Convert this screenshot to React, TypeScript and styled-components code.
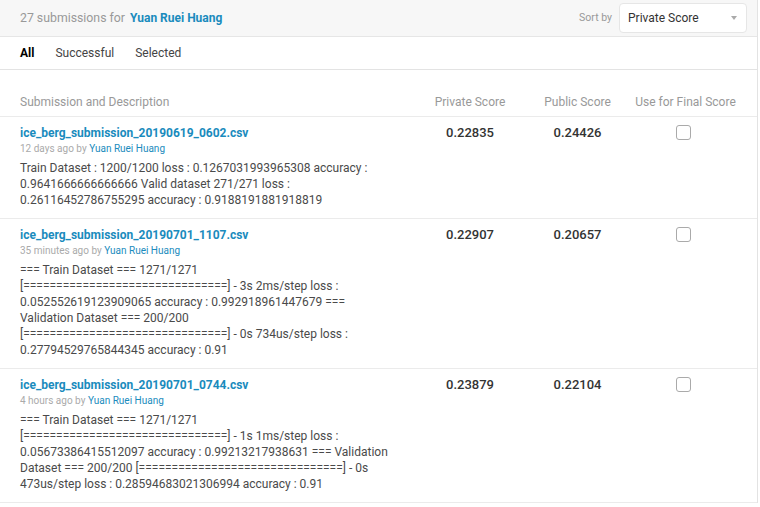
import React from "react";
import styled, { createGlobalStyle } from "styled-components";

const Global = createGlobalStyle`
  html, body { margin: 0; padding: 0; background: #fff; }
  body { font-family: Roboto, "Liberation Sans", Arial, sans-serif; color: #333; }
  * { box-sizing: border-box; }
`;

const Card = styled.div`
  width: 758px;
  border-right: 1px solid #e3e3e3;
  background: #fff;
`;

const TopBar = styled.div`
  height: 37px;
  background: #f7f7f7;
  border-bottom: 1px solid #e6e6e6;
  display: flex;
  align-items: center;
  padding: 0 10px 1px 20px;
`;

const Count = styled.div`
  flex: 1;
  font-size: 12.3px;
  color: #999;
`;

const Owner = styled.span`
  color: #1a8bbd;
  font-weight: 700;
  font-size: 12px;
  margin-left: 5px;
`;

const SortLabel = styled.span`
  font-size: 10.5px;
  color: #999;
  margin-right: 7px;
`;

const Select = styled.div`
  width: 128px;
  height: 30px;
  background: #fff;
  border: 1px solid #e6e6e6;
  border-radius: 4px;
  display: flex;
  align-items: center;
  justify-content: space-between;
  padding: 0 9px 0 8px;
  font-size: 12px;
  color: #333;
`;

const Caret = styled.span`
  width: 0;
  height: 0;
  border-left: 3.5px solid transparent;
  border-right: 3.5px solid transparent;
  border-top: 4px solid #aaa;
`;

const Tabs = styled.div`
  height: 33px;
  border-bottom: 1px solid #e3e3e3;
  display: flex;
  align-items: center;
  gap: 21px;
  padding: 0 0 0 20px;
`;

const Tab = styled.span<{ $active?: boolean }>`
  font-size: 12px;
  color: ${(p) => (p.$active ? "#000" : "#444")};
  font-weight: ${(p) => (p.$active ? 700 : 400)};
`;

const Grid = styled.div`
  display: grid;
  grid-template-columns: 390px 120px 95px 121px;
  padding-left: 20px;
`;

const HeadRow = styled(Grid)`
  height: 47px;
  align-items: end;
  padding-bottom: 7px;
  border-bottom: 1px solid #ebebeb;
`;

const HeadCell = styled.div<{ $center?: boolean }>`
  font-size: 12px;
  color: #999;
  text-align: ${(p) => (p.$center ? "center" : "left")};
`;

const Row = styled(Grid)`
  padding-top: 7px;
  padding-bottom: 10px;
  border-bottom: 1px solid #ebebeb;
`;

const Desc = styled.div`
  display: flex;
  flex-direction: column;
  padding-right: 12px;
`;

const FileName = styled.a`
  font-size: 12px;
  font-weight: 700;
  color: #1a8bbd;
  line-height: 18px;
  text-decoration: none;
`;

const Meta = styled.div`
  font-size: 10px;
  color: #aaa;
  line-height: 14px;
  margin-bottom: 4px;
`;

const MetaUser = styled.span`
  color: #1a8bbd;
`;

const Body = styled.div`
  font-size: 12px;
  line-height: 16px;
  color: #4a4a4a;
  word-break: break-word;
`;

const Score = styled.div`
  font-size: 13px;
  font-weight: 500;
  color: #333;
  text-align: center;
  line-height: 18px;
`;

const CheckCell = styled.div`
  display: flex;
  justify-content: center;
  padding-top: 1px;
`;

const Check = styled.span`
  width: 15px;
  height: 15px;
  border: 1.5px solid #aaa;
  border-radius: 3px;
  background: #fff;
  margin-right: 5px;
`;

const bar = "[" + "=".repeat(31) + "]";

const rows = [
  {
    file: "ice_berg_submission_20190619_0602.csv",
    ago: "12 days ago",
    text: "Train Dataset : 1200/1200 loss : 0.1267031993965308 accuracy : 0.9641666666666666 Valid dataset 271/271 loss : 0.26116452786755295 accuracy : 0.9188191881918819",
    priv: "0.22835",
    pub: "0.24426",
  },
  {
    file: "ice_berg_submission_20190701_1107.csv",
    ago: "35 minutes ago",
    text: `=== Train Dataset === 1271/1271 ${bar} - 3s 2ms/step loss : 0.052552619123909065 accuracy : 0.992918961447679 === Validation Dataset === 200/200 ${bar} - 0s 734us/step loss : 0.27794529765844345 accuracy : 0.91`,
    priv: "0.22907",
    pub: "0.20657",
  },
  {
    file: "ice_berg_submission_20190701_0744.csv",
    ago: "4 hours ago",
    text: `=== Train Dataset === 1271/1271 ${bar} - 1s 1ms/step loss : 0.05673386415512097 accuracy : 0.99213217938631 === Validation Dataset === 200/200 ${bar} - 0s 473us/step loss : 0.28594683021306994 accuracy : 0.91`,
    priv: "0.23879",
    pub: "0.22104",
  },
];

export default function App() {
  return (
    <>
      <Global />
      <Card>
        <TopBar>
          <Count>
            27 submissions for<Owner>Yuan Ruei Huang</Owner>
          </Count>
          <SortLabel>Sort by</SortLabel>
          <Select>
            Private Score
            <Caret />
          </Select>
        </TopBar>
        <Tabs>
          <Tab $active>All</Tab>
          <Tab>Successful</Tab>
          <Tab>Selected</Tab>
        </Tabs>
        <HeadRow>
          <HeadCell>Submission and Description</HeadCell>
          <HeadCell $center>Private Score</HeadCell>
          <HeadCell $center>Public Score</HeadCell>
          <HeadCell $center>Use for Final Score</HeadCell>
        </HeadRow>
        {rows.map((r) => (
          <Row key={r.file}>
            <Desc>
              <FileName href="#">{r.file}</FileName>
              <Meta>
                {r.ago} by <MetaUser>Yuan Ruei Huang</MetaUser>
              </Meta>
              <Body>{r.text}</Body>
            </Desc>
            <Score>{r.priv}</Score>
            <Score>{r.pub}</Score>
            <CheckCell>
              <Check />
            </CheckCell>
          </Row>
        ))}
      </Card>
    </>
  );
}
